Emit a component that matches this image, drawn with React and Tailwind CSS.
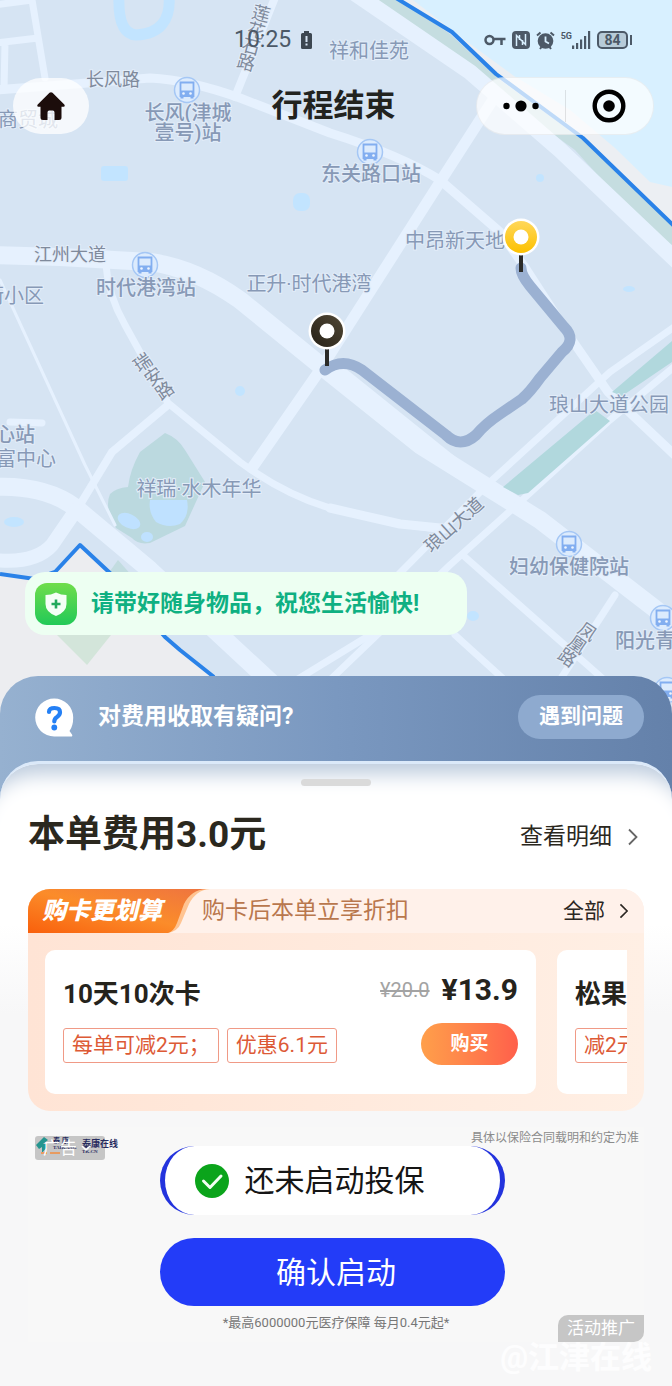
import React from 'react'

const stations = [
  { x: 187, y: 90 },
  { x: 370, y: 152 },
  { x: 145, y: 265 },
  { x: 569, y: 544 },
  { x: 663, y: 618 },
  { x: 667, y: 690 },
];

const labels = [
  { text: "祥和佳苑", x: 369, y: 58 },
  { text: "长风(津城", x: 188, y: 120, bold: true },
  { text: "壹号)站", x: 188, y: 140, bold: true },
  { text: "东关路口站", x: 371, y: 181, bold: true },
  { text: "中昂新天地", x: 455, y: 248 },
  { text: "时代港湾站", x: 146, y: 295, bold: true },
  { text: "正升·时代港湾", x: 309, y: 291 },
  { text: "街小区", x: 14, y: 303 },
  { text: "商贸城", x: 28, y: 127 },
  { text: "琅山大道公园", x: 609, y: 412 },
  { text: "祥瑞·水木年华", x: 199, y: 496 },
  { text: "心站", x: 15, y: 442, bold: true },
  { text: "富中心", x: 26, y: 466 },
  { text: "妇幼保健院站", x: 569, y: 574, bold: true },
  { text: "阳光青", x: 645, y: 648, bold: true },
];

// street names whose characters are stacked along a steep road
const streets = [
  { chars: [["莲", 261, 14], ["花", 256, 31], ["石", 251, 47], ["路", 246, 63]], angle: 15 },
  { chars: [["瑞", 143, 363], ["安", 154, 377], ["路", 165, 391]], angle: -35 },
  { chars: [["凤", 587, 632], ["凰", 577, 645], ["路", 567, 658]], angle: 35 },
];

function BusStop({ x, y }) {
  return (
    <g transform={`translate(${x} ${y})`}>
      <circle r="12.5" fill="#dcebfd" stroke="#a5c7f5" strokeWidth="1.5" />
      <path d="M-6.5 -7.5h13v13.5h-13z" fill="#dcebfd" stroke="#82aef0" strokeWidth="1.8" />
      <path d="M-7 0.5h14v6h-14z" fill="#82aef0" />
      <path d="M-5 6v2.5M5 6v2.5" stroke="#82aef0" strokeWidth="3" />
      <circle cx="-3.5" cy="3.5" r="1.3" fill="#eef5ff" />
      <circle cx="3.5" cy="3.5" r="1.3" fill="#eef5ff" />
    </g>
  )
}

function Pin({ x, y, fill }) {
  return (
    <g transform={`translate(${x} ${y})`}>
      <path d="M0 18v17" stroke="#2b2b28" strokeWidth="4" />
      <circle r="18.5" fill="#fff" />
      <circle r="16" fill={fill} />
      <circle r="7.5" fill="#fff" />
    </g>
  )
}

function MapView() {
  return (
    <svg viewBox="0 0 672 730" className="absolute top-0 left-0 w-full" aria-label="地图">
      <defs>
        <linearGradient id="pinYellow" x1="0" y1="0" x2="0" y2="1">
          <stop offset="0" stopColor="#ffd75a" />
          <stop offset="1" stopColor="#fcc100" />
        </linearGradient>
        <linearGradient id="pinDark" x1="1" y1="0" x2="0" y2="1">
          <stop offset="0" stopColor="#504735" />
          <stop offset="1" stopColor="#262117" />
        </linearGradient>
      </defs>
      <rect width="672" height="730" fill="#d6e4f3" />

      {/* river bank and water */}
      <path d="M396 0L450 32L503 79L583 138L672 224V0z" fill="#eceff3" />
      <path d="M413 0L462 38L514 76L570 110L615 148L650 182L672 187V0z" fill="#d8f0ff" />
      <path d="M376 0L400 0L450 34L500 80L583 140L672 226V245L640 222L575 150L486 86z" fill="#c5dde0" />
      <path d="M119 -4C118 22 124 34 136 35C160 34 171 20 169 -4" fill="none" stroke="#c2e4ff" strokeWidth="11" />
      <g fill="#c2e4ff">
        <rect x="101" y="166" width="27" height="15" rx="3" />
        <rect x="293" y="193" width="17" height="18" rx="7" />
        <circle cx="540" cy="178" r="4" />
        <ellipse cx="629" cy="289" rx="6" ry="3" />
        <circle cx="240" cy="391" r="5" />
        <ellipse cx="14" cy="522" rx="10" ry="5" />
        <ellipse cx="473" cy="616" rx="6" ry="5" />
      </g>

      {/* parks */}
      <path d="M165 433Q178 438 185 450L205 482L185 526L150 543Q138 545 132 538L116 528Q104 508 110 494Q116 488 128 487Q130 470 140 452z" fill="#bbd9df" />
      <g fill="#bfe1ff">
        <path d="M150 500L187 500Q190 515 180 524Q168 529 156 522Q148 512 150 500z" />
        <ellipse cx="129" cy="521" rx="12" ry="7" transform="rotate(25 129 521)" />
        <ellipse cx="147" cy="537" rx="6" ry="5" />
      </g>
      <path d="M118 560L140 585H100z" fill="#c2dce0" />

      <g fill="none" stroke="#e6f1fe" strokeLinejoin="round" strokeLinecap="round">
        <path d="M350 -10L470 72L560 150L680 264" strokeWidth="16" />
        <path d="M-5 90L75 84L150 78Q190 80 240 98L330 133Q400 155 440 180L500 232L524 266L572 340L608 392L680 460" strokeWidth="9" />
        <path d="M496 95L440 182L320 370L252 468" strokeWidth="11" />
        <path d="M278 -10L235 97" strokeWidth="8" />
        <path d="M-5 5L32 0L45 78M-5 43L38 38M5 43L4 90" strokeWidth="7" />
        <path d="M-5 255L60 257L150 262Q195 268 240 300L320 365L420 445L540 520L680 628" strokeWidth="18" />
        <path d="M106 265Q108 295 125 325L168 403L240 462Q285 495 330 508L400 524L445 530" strokeWidth="7" />
        <path d="M330 508L400 524L440 528" strokeWidth="9" />
        <path d="M168 405L112 452L78 508" strokeWidth="8" />
        <path d="M0 280L85 465L115 525" strokeWidth="3" />
        <path d="M10 422L42 423" strokeWidth="7" />
        <path d="M-5 487Q45 485 76 508L150 570L290 700" strokeWidth="18" />
        <path d="M-5 560Q35 564 52 545L76 510" strokeWidth="14" />
        <path d="M680 323L610 372L490 482L398 575" strokeWidth="7" />
        <path d="M680 362L610 420L520 502L450 565L330 680" strokeWidth="7" />
        <path d="M465 557L610 685" strokeWidth="7" />
        <path d="M615 595L560 680" strokeWidth="7" />
        <path d="M455 635L510 685M370 635L280 690" strokeWidth="7" />
      </g>
      <path d="M330 362L345 368L442 446L462 462L440 466L320 375z" fill="#e6f1fe" />

      {/* green belt between the two carriageways */}
      <path d="M672 341L612 392L622 396L672 362zM595 410L503 487L518 495L528 493L610 421z" fill="#b1d8dd" />

      {/* service area border */}
      <path d="M0 574L35 579L55 572L80 545L110 573L165 637L180 650L214 676L280 730H0z" fill="#ecedf0" />
      <path d="M52 630H115L87 665z" fill="#d3e5da" />
      <g fill="none" stroke="#2a82e8" strokeWidth="4" strokeLinejoin="round">
        <path d="M0 574L35 579L55 572L80 545L110 573L165 637L180 650L214 677" />
        <path d="M396 -2L452 32L496 74L583 138L674 226" />
      </g>

      {/* ridden route */}
      <path
        d="M325 370Q343 357 362 370L446 435Q460 449 476 435Q485 424 500 414L522 399Q530 392 540 378L562 352Q577 340 564 327L530 286Q521 275 521 268"
        fill="none" stroke="#9bb1d2" strokeWidth="11" strokeLinecap="round" strokeLinejoin="round"
      />

      {stations.map((s) => <BusStop key={`${s.x}-${s.y}`} x={s.x} y={s.y} />)}

      <g fill="#8799b6" stroke="#e3edf9" strokeWidth="2" style={{ paintOrder: "stroke" }}>
        {labels.map((l) => (
          <text key={l.text} x={l.x} y={l.y} textAnchor="middle" fontSize={20} fontWeight={l.bold ? 500 : 400}>{l.text}</text>
        ))}
      </g>
      <g fill="#7f8a9c" stroke="#e3edf9" strokeWidth="2" fontSize="18" textAnchor="middle" style={{ paintOrder: "stroke" }}>
        <text x="113" y="86">长风路</text>
        <text x="70" y="261">江州大道</text>
        <text transform="translate(454 525) rotate(-42)" y="6">琅山大道</text>
        {streets.map((s) => s.chars.map(([char, x, y]) => (
          <text key={`${char}-${x}`} transform={`translate(${x} ${y}) rotate(${s.angle})`} y="6">{char}</text>
        )))}
      </g>

      <Pin x={521} y={237} fill="url(#pinYellow)" />
      <Pin x={327} y={331} fill="url(#pinDark)" />
    </svg>
  )
}

function StatusBar() {
  return (
    <div className="flex items-center justify-between pt-6 pr-10 pl-[234px] text-[#4c5967]">
      <div className="flex items-center gap-[10px]">
        <span className="text-[23px] leading-8">10:25</span>
        <svg width="11" height="18" viewBox="0 0 11 18" fill="#3d4751">
          <path d="M3 0h5v2h1.500q1.500 0 1.500 1.500v13q0 1.500-1.500 1.500h-8q-1.500 0-1.500-1.500v-13q0-1.500 1.500-1.500h1.500z" />
          <path d="M4.500 5h2v6h-2zM4.500 12.500h2v2h-2z" fill="#d6e4f3" />
        </svg>
      </div>
      <div className="flex items-center gap-[6px]">
        <svg width="22" height="12" viewBox="0 0 22 12" fill="none" stroke="currentColor" strokeWidth="2.500">
          <circle cx="5.500" cy="6" r="4" />
          <path d="M9.500 5h12M17.500 5v6" />
        </svg>
        <svg width="18" height="18" viewBox="0 0 18 18">
          <rect width="18" height="18" rx="4" fill="currentColor" />
          <path d="M4.500 15V4.500L13.500 13.500V3M7.500 4v5M10.500 9v5" fill="none" stroke="#d8f0ff" strokeWidth="1.500" />
        </svg>
        <svg width="19" height="19" viewBox="0 0 19 19">
          <circle cx="9.500" cy="10" r="7.800" fill="currentColor" />
          <path d="M1 4.500L4.500 1.500M18 4.500L14.500 1.500M4 18L5.500 16M15 18L13.500 16" stroke="currentColor" strokeWidth="2" />
          <path d="M9.500 5.500V10.500L13 12.500" fill="none" stroke="#d8f0ff" strokeWidth="1.800" />
        </svg>
        <div className="flex items-end">
          <span className="self-start text-[9px] leading-[10px] font-bold">5G</span>
          <svg width="19" height="18" viewBox="0 0 19 18" fill="currentColor">
            <path d="M0 14.500h2.200v3.500h-2.200zM4 12h2.200v6h-2.200zM8 8.500h2.200v9.500h-2.200zM12 5h2.200v13h-2.200zM16 0h2.200v18h-2.200z" />
          </svg>
        </div>
        <div className="flex items-center gap-[2px]">
          <span className="h-[18px] w-[31px] rounded-[5px] border-2 border-current bg-[#b7cbd8] text-center text-[14px] leading-[15px] font-bold">84</span>
          <span className="h-[10px] w-[2px] bg-current" />
        </div>
      </div>
    </div>
  )
}

function NavBar() {
  return (
    <div className="grid grid-cols-[1fr_auto_1fr] items-center pt-[21px] pr-[18px] pl-[13px]">
      <button aria-label="首页" className="flex h-14 w-[76px] items-center justify-center rounded-full bg-white/75">
        <svg width="28" height="28" viewBox="0 0 28 28" fill="#1c0d0b">
          <path d="M12.500 0.800Q14 -0.400 15.500 0.800L27.300 12.500Q28.500 14.500 26.500 14.800H24.500V25.500Q24.500 28 22 28H17.500V20.500Q17.500 18.500 15.800 18.500H12.200Q10.500 18.500 10.500 20.500V28H6Q3.500 28 3.500 25.500V14.800H1.500Q-0.500 14.500 0.700 12.500z" />
        </svg>
      </button>
      <h1 className="text-[31px] leading-10 font-bold text-[#22231f]">行程结束</h1>
      <div className="flex h-[58px] w-[178px] items-center justify-self-end rounded-full border border-black/5 bg-white/70">
        <button aria-label="更多" className="flex flex-1 justify-center">
          <svg width="36" height="12" viewBox="0 0 36 12">
            <circle cx="3.500" cy="6" r="3.200" />
            <circle cx="18" cy="6" r="5.600" />
            <circle cx="32.500" cy="6" r="3.200" />
          </svg>
        </button>
        <span className="h-8 w-px bg-black/10" />
        <button aria-label="关闭" className="flex flex-1 justify-center">
          <svg width="34" height="34" viewBox="0 0 34 34">
            <circle cx="17" cy="17" r="14.300" fill="none" stroke="#000" strokeWidth="4.400" />
            <circle cx="17" cy="17" r="5.800" />
          </svg>
        </button>
      </div>
    </div>
  )
}

function Tip() {
  return (
    <div className="mt-auto mb-[41px] ml-[25px] flex h-[63px] w-[442px] items-center gap-[14px] rounded-[20px] bg-[#edfff2] px-[10px]">
      <svg width="42" height="42" viewBox="0 0 42 42">
        <defs>
          <linearGradient id="shieldBg" x1="0" y1="0" x2="0" y2="1">
            <stop offset="0" stopColor="#6fdd4b" />
            <stop offset="1" stopColor="#22c958" />
          </linearGradient>
        </defs>
        <rect width="42" height="42" rx="12" fill="url(#shieldBg)" />
        <path d="M21 9.500Q26 12 31.500 12V21Q31.500 29 21 33Q10.500 29 10.500 21V12Q16 12 21 9.500z" fill="#f4fff6" />
        <path d="M21 16.500v9M16.500 21h9" stroke="#22a95c" strokeWidth="2.600" />
      </svg>
      <p className="text-[23px] leading-8 font-bold text-[#0fb082]">请带好随身物品，祝您生活愉快!</p>
    </div>
  )
}

function Chevron({ className }) {
  return (
    <svg width="10" height="18" viewBox="0 0 10 18" fill="none" stroke="currentColor" strokeWidth="1.800" className={className}>
      <path d="M1 1.500L8.500 9L1 16.500" />
    </svg>
  )
}

function HelpRow() {
  return (
    <div className="flex items-center justify-between pt-[19px] pr-7 pb-[22px] pl-[35px] text-white">
      <div className="flex items-center gap-6">
        <svg width="39" height="39" viewBox="0 0 39 39">
          <path d="M19.200 0.500A19 19 0 0 1 38.200 19.500Q38.200 28 34.500 33L37 36.500Q38 38.500 36 38.500H19.200A19 19 0 0 1 19.200 0.500z" fill="#fff" />
          <path d="M14 14Q14 10 19.500 10Q25 10 25 14.300Q25 17 22 19Q19.300 20.700 19.300 23.500" fill="none" stroke="#2480f5" strokeWidth="4.200" strokeLinecap="round" />
          <circle cx="19.300" cy="29.500" r="2.900" fill="#2480f5" />
        </svg>
        <p className="text-[23px] leading-8 font-bold">对费用收取有疑问?</p>
      </div>
      <button className="h-11 rounded-full bg-[#8eaacf] px-[21px] text-[21px] font-bold">遇到问题</button>
    </div>
  )
}

const tagClass = "shrink-0 whitespace-nowrap rounded-[3px] border border-[#f09a86] px-2 text-[21px] leading-[33px] text-[#dd5a36]";

function CardOffers() {
  return (
    <section className="mt-[30px] overflow-hidden rounded-[22px] bg-linear-to-r from-[#ffe4d5] to-[#ffefe4]">
      <div className="flex h-11 items-center bg-[#fff1ea] pr-[15px]">
        <div className="relative h-11 w-[174px] shrink-0">
          <svg width="182" height="44" viewBox="0 0 182 44" className="absolute top-0 left-0">
            <defs>
              <linearGradient id="tabBg" x1="0" y1="1" x2="1" y2="0">
                <stop offset="0" stopColor="#f9600c" />
                <stop offset="0.5" stopColor="#fb8c2a" />
                <stop offset="1" stopColor="#ee7440" />
              </linearGradient>
            </defs>
            <path d="M0 0H182Q168 1 161 15L153 34Q150 42 140 44H0z" fill="#ffc492" />
            <path d="M0 0H178Q163 1 156 15L149 34Q146 42 140 44H0z" fill="url(#tabBg)" />
          </svg>
          <h3 className="relative pl-[14px] text-[24px] leading-11 font-black text-white italic">购卡更划算</h3>
        </div>
        <p className="text-[23px] leading-8 text-[#b9774d]">购卡后本单立享折扣</p>
        <a href="#cards" className="ml-auto flex items-center gap-[14px] text-[21px] leading-8 text-[#2b2622]">
          全部
          <Chevron className="h-4" />
        </a>
      </div>

      <div id="cards" className="mx-[17px] my-[17px] flex gap-[21px] overflow-hidden">
        <div className="flex h-36 w-[491px] shrink-0 justify-between rounded-[10px] bg-white px-[18px] pt-[22px]">
          <div>
            <h4 className="text-[26px] leading-11 font-bold text-[#25231c]">10天10次卡</h4>
            <div className="mt-3 flex gap-2">
              <span className={tagClass}>每单可减2元；</span>
              <span className={tagClass}>优惠6.1元</span>
            </div>
          </div>
          <div className="flex flex-col items-end">
            <p className="flex items-center gap-3 leading-9">
              <del className="text-[20px] text-[#a3a3a3]">¥20.0</del>
              <span className="text-[30px] font-bold text-[#25231c]">¥13.9</span>
            </p>
            <button className="mt-[15px] h-[42px] w-[97px] rounded-full bg-linear-to-r from-[#ff9f4a] to-[#ff5f4b] text-[19px] font-bold text-white">购买</button>
          </div>
        </div>
        <div className="h-36 w-[491px] shrink-0 rounded-[10px] bg-white px-[18px] pt-[22px]">
          <h4 className="text-[26px] leading-11 font-bold text-[#25231c]">松果</h4>
          <div className="mt-3 flex">
            <span className={tagClass}>减2元</span>
          </div>
        </div>
      </div>
    </section>
  )
}

function AdBanner() {
  return (
    <section className="relative mt-4 flex flex-col items-center bg-[#f8f8f8]">
      <div className="flex w-full items-start justify-between pt-1 pr-[5px] pl-[7px] leading-[15px]">
        <div className="relative mt-[5px] h-0">
          <svg width="84" height="24" viewBox="0 0 84 24" className="absolute top-0 left-0">
            <rect width="70" height="24" rx="3" fill="#c6c6c6" />
            <path d="M1 9L9 1L13 4L8 8H12V11L7 17V11L4 13z" fill="#25958f" />
            <path d="M6 17h6M15 17h10" stroke="#e89b60" strokeWidth="2" />
            <g fill="#262b5e" fontFamily="'Liberation Serif', 'Noto Sans CJK SC', serif" fontWeight="700">
              <text x="18" y="7" fontSize="7">泰 康</text>
              <text x="18" y="13" fontSize="5">TAIKANG</text>
              <text x="47" y="11" fontSize="9">泰康在线</text>
              <text x="47" y="17" fontSize="5">TK.CN</text>
            </g>
          </svg>
          <div className="relative flex h-6 w-[70px] items-center gap-1 pl-2 text-[17px] leading-6 text-white">
            广告
            <svg width="10" height="6" viewBox="0 0 10 6" fill="none" stroke="#fff" strokeWidth="1.500"><path d="M1 1L5 5L9 1" /></svg>
          </div>
        </div>
        <p className="text-[12px] text-[#8b8b8b]">具体以保险合同载明和约定为准</p>
      </div>
      <div className="mr-2 flex flex-col gap-[23px]">
        <div className="flex h-[69px] w-[345px] items-center gap-4 rounded-full border-x-[5px] border-[#2333dd] bg-white pl-[30px]">
          <svg width="34" height="34" viewBox="0 0 34 34">
            <circle cx="17" cy="17" r="17" fill="#0ba41b" />
            <path d="M8.500 17L15 23.500L26 12" fill="none" stroke="#f2fff2" strokeWidth="3" strokeLinecap="round" strokeLinejoin="round" />
          </svg>
          <p className="text-[30px] leading-10 text-[#151515]">还未启动投保</p>
        </div>
        <button className="h-[68px] w-[345px] rounded-full bg-[#233cf8] pl-2 text-[30px] text-white">确认启动</button>
      </div>
      <p className="pt-2 pb-[10px] text-[13px] leading-[18px] text-[#777]">*最高6000000元医疗保障 每月0.4元起*</p>
      <span className="absolute right-0 bottom-0 rounded-tl-[10px] rounded-br-[10px] bg-[#c6c6c6] px-[9px] text-[17px] leading-[27px] text-white">活动推广</span>
    </section>
  )
}

function App() {
  return (
    <div className="relative min-h-screen bg-[#f7f7f7] [font-family:Roboto,'Noto_Sans_CJK_SC',sans-serif]">
      <MapView />
      <header className="relative flex aspect-[168/169] flex-col">
        <StatusBar />
        <NavBar />
        <Tip />
      </header>
      <main className="relative rounded-t-[38px] bg-linear-to-r from-[#96b1d0] via-[#7a98c0] to-[#6481aa]">
        <HelpRow />
        <div className="rounded-t-[38px] border-t-[3px] border-[#dbe9f9] bg-[linear-gradient(to_bottom,#fff_160px,#f7f7f8_250px)] px-7 pt-[15px] pb-3 shadow-[inset_0_32px_20px_-22px_#bccbdd]">
          <div className="mx-auto h-[7px] w-[70px] rounded-full bg-[#dadada]" />
          <div className="mt-[25px] flex items-center justify-between pr-[6px] text-[#2b281e]">
            <h2 className="text-[37px] leading-12 font-bold">本单费用3.0元</h2>
            <a href="#detail" className="flex items-center gap-4 pt-1 text-[23px] leading-8">
              查看明细
              <Chevron className="text-[#666]" />
            </a>
          </div>
          <CardOffers />
          <AdBanner />
          <p className="-mr-2 text-right text-[31px] leading-8 font-bold text-white/80">@江津在线</p>
        </div>
      </main>
    </div>
  )
}

export default App
